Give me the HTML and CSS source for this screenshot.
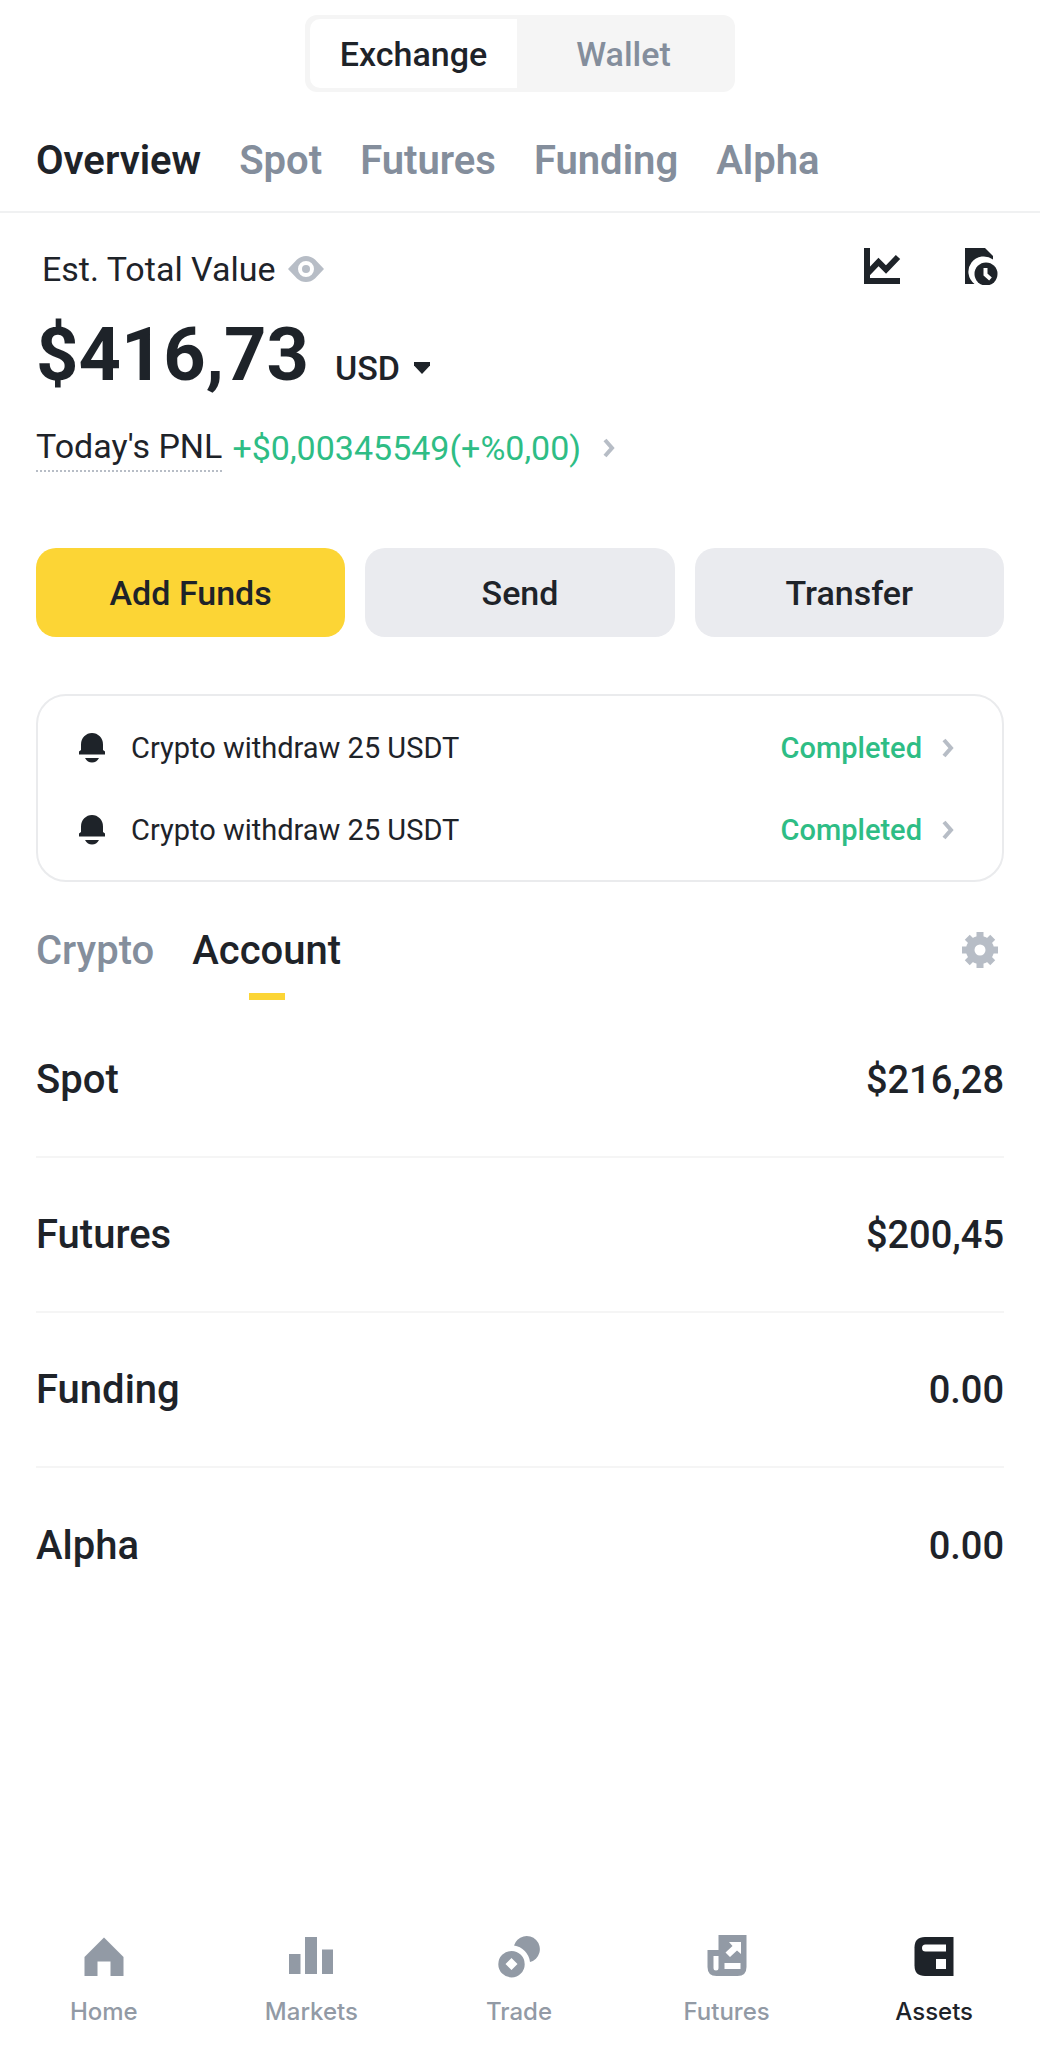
FILE: index.html
```html
<!DOCTYPE html>
<html lang="en">
<head>
    <meta charset="UTF-8">
    <meta name="viewport" content="width=device-width, initial-scale=1.0">
    <title>Assets</title>
    <link rel="stylesheet" href="styles.css">
</head>
<body>
    <header class="top">
        <div class="switch">
            <button type="button" class="switch-item active">Exchange</button>
            <button type="button" class="switch-item">Wallet</button>
        </div>
        <nav class="tabs">
            <a href="#overview" class="tab active">Overview</a>
            <a href="#spot" class="tab">Spot</a>
            <a href="#futures" class="tab">Futures</a>
            <a href="#funding" class="tab">Funding</a>
            <a href="#alpha" class="tab">Alpha</a>
        </nav>
    </header>

    <main class="content">
        <section class="balance">
            <div class="balance-head">
                <span class="balance-label">Est. Total Value</span>
                <button type="button" class="icon-btn" aria-label="Hide balance">
                    <svg class="eye" width="36" height="26" viewBox="0 0 36 26">
                        <path fill="#b7bdc6" fill-rule="evenodd" d="M0 13 9 3.500Q13 0 18 0T27 3.500L36 13 27 22.500Q23 26 18 26T9 22.500ZM18 5a8 8 0 1 0 0 16 8 8 0 0 0 0-16Z"/>
                        <circle cx="18" cy="13" r="4" fill="#b7bdc6"/>
                    </svg>
                </button>
                <div class="balance-tools">
                    <button type="button" class="icon-btn" aria-label="Analysis">
                        <svg width="38" height="38" viewBox="0 0 38 38">
                            <path fill="none" stroke="#1e2329" stroke-width="6" d="M4 1V34H37M5 26 15.500 15 23 22.500 35 10"/>
                        </svg>
                    </button>
                    <button type="button" class="icon-btn" aria-label="History">
                        <svg width="38" height="38" viewBox="0 0 38 38">
                            <path fill="#1e2329" d="M4 1H24L32 9V12.500A15 15 0 0 0 13.500 37H4Z"/>
                            <circle cx="25" cy="27" r="11.500" fill="#1e2329"/>
                            <path fill="none" stroke="#fff" stroke-width="4" d="M24.500 21V27.500L29.500 32"/>
                        </svg>
                    </button>
                </div>
            </div>
            <div class="total">
                <span class="total-value">$416,73</span>
                <label class="currency" aria-label="Currency">
                    <select class="currency-select" aria-label="Currency">
                        <option>USD</option>
                    </select>
                    <svg width="18" height="12" viewBox="0 0 18 12">
                        <path fill="#1e2329" d="M1 0H17V3.500L9 12 1 3.500Z"/>
                    </svg>
                </label>
            </div>
            <div class="pnl">
                <span class="pnl-label">Today's PNL</span>
                <span class="pnl-value">+$0,00345549(+%0,00)</span>
                <svg class="chevron" width="12" height="20" viewBox="0 0 12 20">
                    <path fill="none" stroke="#b7bdc6" stroke-width="4" d="M2 2 9 10 2 18"/>
                </svg>
            </div>
        </section>

        <div class="actions">
            <button type="button" class="btn primary">Add Funds</button>
            <button type="button" class="btn">Send</button>
            <button type="button" class="btn">Transfer</button>
        </div>

        <div class="notices">
            <a href="#withdraw" class="notice">
                <svg width="26" height="30" viewBox="0 0 26 30">
                    <path fill="#1e2329" d="M2 11.500A11 11.500 0 0 1 24 11.500V17L26 18.500V21.500H0V18.500L2 17ZM6 25H20Q17.500 29.500 13 29.500T6 25Z"/>
                </svg>
                <span class="notice-text">Crypto withdraw 25 USDT</span>
                <span class="notice-status">Completed</span>
                <svg class="chevron" width="12" height="20" viewBox="0 0 12 20">
                    <path fill="none" stroke="#b7bdc6" stroke-width="4" d="M2 2 9 10 2 18"/>
                </svg>
            </a>
            <a href="#withdraw" class="notice">
                <svg width="26" height="30" viewBox="0 0 26 30">
                    <path fill="#1e2329" d="M2 11.500A11 11.500 0 0 1 24 11.500V17L26 18.500V21.500H0V18.500L2 17ZM6 25H20Q17.500 29.500 13 29.500T6 25Z"/>
                </svg>
                <span class="notice-text">Crypto withdraw 25 USDT</span>
                <span class="notice-status">Completed</span>
                <svg class="chevron" width="12" height="20" viewBox="0 0 12 20">
                    <path fill="none" stroke="#b7bdc6" stroke-width="4" d="M2 2 9 10 2 18"/>
                </svg>
            </a>
        </div>

        <div class="view-bar">
            <button type="button" class="view">Crypto</button>
            <button type="button" class="view active">Account</button>
            <button type="button" class="icon-btn settings" aria-label="Settings">
                <svg width="36" height="36" viewBox="0 0 36 36">
                    <g fill="#b7bdc6">
                        <path d="M14.500 0H21.500V36H14.500ZM0 14.500H36V21.500H0Z"/>
                        <path d="M14.500 0H21.500V36H14.500ZM0 14.500H36V21.500H0Z" transform="rotate(45 18 18)"/>
                        <circle cx="18" cy="18" r="14"/>
                    </g>
                    <circle cx="18" cy="18" r="5.500" fill="#fff"/>
                </svg>
            </button>
        </div>

        <ul class="accounts">
            <li class="account"><span>Spot</span><span class="amount">$216,28</span></li>
            <li class="account"><span>Futures</span><span class="amount">$200,45</span></li>
            <li class="account"><span>Funding</span><span class="amount">0.00</span></li>
            <li class="account"><span>Alpha</span><span class="amount">0.00</span></li>
        </ul>
    </main>

    <nav class="bottom-nav">
        <a href="#home" class="nav-item">
            <svg width="44" height="44" viewBox="0 0 44 44">
                <path fill="currentColor" d="M2.500 22 22 2.500 41.500 22V41H28.500V26.500H15.500V41H2.500Z"/>
            </svg>
            <span>Home</span>
        </a>
        <a href="#markets" class="nav-item">
            <svg width="44" height="44" viewBox="0 0 44 44">
                <path fill="currentColor" d="M0 19H11.500V39H0ZM16 2H28V39H16ZM33 14.500H44V39H33Z"/>
            </svg>
            <span>Markets</span>
        </a>
        <a href="#trade" class="nav-item">
            <svg width="44" height="44" viewBox="0 0 44 44">
                <path fill="currentColor" d="M17 10.500A13.200 13.200 0 1 1 33 27A19 19 0 0 0 17 10.500Z"/>
                <path fill="currentColor" fill-rule="evenodd" d="M14.500 16a13.200 13.200 0 1 0 0 26.400 13.200 13.200 0 0 0 0-26.400ZM14.500 23 20.500 29 14.500 35 8.500 29Z"/>
            </svg>
            <span>Trade</span>
        </a>
        <a href="#futures" class="nav-item">
            <svg width="44" height="44" viewBox="0 0 44 44">
                <path fill="currentColor" d="M13.500 0H41.500V32Q41.500 41 32.500 41H11.500Q2.500 41 2.500 32V15H13.500Z"/>
                <path fill="#fff" d="M24 7H36V19L32 15.500 25 22 20.500 17.500 27.500 11ZM19.500 28H35.500V34H19.500ZM8.500 21H13.500V33Q13.500 35.500 11 35.500T8.500 33Z"/>
            </svg>
            <span>Futures</span>
        </a>
        <a href="#assets" class="nav-item active">
            <svg width="44" height="44" viewBox="0 0 44 44">
                <path fill="currentColor" d="M13 2H41.500V41H13Q2.500 41 2.500 30.500V12.500Q2.500 2 13 2Z"/>
                <path fill="#fff" d="M13.500 9.500H34V16.500H13.500A3.500 3.500 0 0 1 13.500 9.500ZM24 24H34V34H24Z"/>
            </svg>
            <span>Assets</span>
        </a>
    </nav>
</body>
</html>
```
FILE: styles.css
```css
* {
    box-sizing: border-box;
}

body {
    display: flex;
    flex-direction: column;
    min-height: 100vh;
    margin: 0;
    background-color: #fff;
    color: #1e2329;
    font-family: Roboto, "Liberation Sans", sans-serif;
    font-size: 34px;
    line-height: 44px;
}

a {
    color: inherit;
    text-decoration: none;
}

button, select {
    margin: 0;
    padding: 0;
    border: none;
    background: none;
    color: inherit;
    font: inherit;
    cursor: pointer;
}

svg {
    display: block;
    flex: none;
}

/* Header */
.top {
    padding-top: 15px;
    border-bottom: 2px solid #f0f1f2;
}

.switch {
    display: flex;
    width: 430px;
    margin: 0 auto;
    padding: 4px 5px;
    border-radius: 12px;
    background-color: #f5f5f5;
}

.switch-item {
    flex: 1;
    height: 69px;
    border-radius: 10px 0 0 10px;
    color: #848e9c;
    font-weight: 500;
}

.switch-item.active {
    flex: none;
    width: 207px;
    background-color: #fff;
    color: #1e2329;
}

.tabs {
    display: flex;
    gap: 38px;
    padding: 45px 36px 26px;
    font-size: 40px;
    font-weight: 600;
    line-height: 48px;
}

.tab {
    color: #848e9c;
}

.tab.active {
    color: #1e2329;
}

.content {
    padding: 34px 36px 0;
}

/* Balance */
.balance-head {
    display: flex;
    align-items: center;
    gap: 12px;
    padding: 0 5px 0 6px;
}

.balance-tools {
    display: flex;
    gap: 60px;
    align-self: flex-start;
    margin-left: auto;
}

.total {
    display: flex;
    align-items: baseline;
    gap: 26px;
    margin-top: 20px;
}

.total-value {
    font-size: 74px;
    font-weight: 700;
    line-height: 88px;
}

.currency {
    display: flex;
    align-items: center;
    gap: 12px;
    font-weight: 500;
}

.currency-select {
    appearance: none;
}

.pnl {
    display: flex;
    align-items: center;
    margin-top: 25px;
}

.pnl-label {
    padding-bottom: 2px;
    border-bottom: 2px dotted #b7bdc6;
}

.pnl-value {
    margin: 0 22px 0 10px;
    color: #2ebd85;
}

/* Buttons */
.actions {
    display: flex;
    gap: 20px;
    margin-top: 76px;
}

.btn {
    flex: 1;
    height: 89px;
    border-radius: 20px;
    background-color: #eaebef;
    font-weight: 500;
}

.btn.primary {
    background-color: #fcd535;
}

/* Withdraw notices */
.notices {
    margin-top: 57px;
    padding: 11px 48px 9px 41px;
    border: 2px solid #eaebed;
    border-radius: 30px;
    font-size: 29px;
}

.notice {
    display: flex;
    align-items: center;
    height: 82px;
}

.notice-text {
    margin-left: 26px;
}

.notice-status {
    margin: 0 20px 0 auto;
    color: #2ebd85;
    font-weight: 500;
}

/* Account list */
.view-bar {
    display: flex;
    align-items: center;
    gap: 38px;
    margin-top: 45px;
    font-size: 40px;
    line-height: 48px;
}

.view {
    display: flex;
    flex-direction: column;
    align-items: center;
    color: #848e9c;
    font-weight: 500;
}

.view.active {
    color: #1e2329;
}

.view::after {
    content: "";
    width: 36px;
    height: 7px;
    margin-top: 18px;
}

.view.active::after {
    background-color: #fcd535;
}

.settings {
    margin: 0 6px 28px auto;
}

.accounts {
    margin: 3px 0 0;
    padding: 0;
    list-style: none;
    font-size: 40px;
    font-weight: 500;
}

.account {
    display: flex;
    justify-content: space-between;
    align-items: center;
    height: 155px;
    border-bottom: 2px solid #f5f5f5;
}

.account:last-child {
    border-bottom: none;
}

.amount {
    font-size: 38px;
}

/* Bottom navigation */
.bottom-nav {
    display: flex;
    margin-top: auto;
    padding: 0 2px 20px 0;
    font-family: Inter, Roboto, sans-serif;
    font-size: 24px;
    font-weight: 500;
    line-height: 32px;
}

.nav-item {
    flex: 1;
    display: flex;
    flex-direction: column;
    align-items: center;
    gap: 17px;
    color: #929aa5;
}

.nav-item.active {
    color: #1e2329;
}
```
